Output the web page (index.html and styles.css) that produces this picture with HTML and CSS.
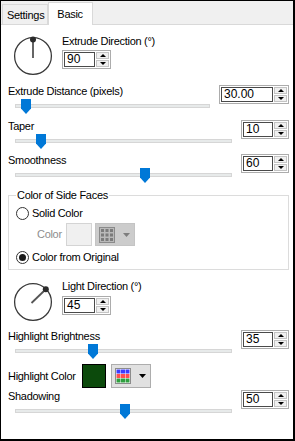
FILE: index.html
```html
<!DOCTYPE html>
<html>
<head>
  <title>Extrude</title>
  <link rel="stylesheet" href="styles.css">
</head>
<body>
  <div class="frame">
    <div class="tabs">
      <div class="tab">Settings</div>
      <div class="tab active">Basic</div>
    </div>

    <div class="panel">
      <div class="dial-row">
        <svg class="dial" width="40" height="40" viewBox="0 0 40 40">
          <circle cx="20" cy="20" r="18.4" fill="none" stroke="#3a3a3a" stroke-width="1.3"/>
          <line x1="20" y1="22" x2="20" y2="4" stroke="#555" stroke-width="1.8"/>
          <circle cx="20" cy="3.5" r="3" fill="#2b2b2b"/>
        </svg>
        <div class="dial-ctl">
          <div class="lbl">Extrude Direction (°)</div>
          <div class="spin"><div class="spin-val w31">90</div><div class="spin-btns"><span class="up"></span><span class="dn"></span></div></div>
        </div>
      </div>

      <div class="slider-row first">
        <div class="lbl">Extrude Distance (pixels)</div>
        <div class="spin"><div class="spin-val w52">30.00</div><div class="spin-btns"><span class="up"></span><span class="dn"></span></div></div>
        <div class="track"><div class="thumb" style="left:5px"></div></div>
      </div>

      <div class="slider-row">
        <div class="lbl">Taper</div>
        <div class="spin"><div class="spin-val w30">10</div><div class="spin-btns"><span class="up"></span><span class="dn"></span></div></div>
        <div class="track"><div class="thumb" style="left:20px"></div></div>
      </div>

      <div class="slider-row">
        <div class="lbl">Smoothness</div>
        <div class="spin"><div class="spin-val w30">60</div><div class="spin-btns"><span class="up"></span><span class="dn"></span></div></div>
        <div class="track"><div class="thumb" style="left:124px"></div></div>
      </div>

      <fieldset class="group">
        <legend>Color of Side Faces</legend>
        <div class="radio-row"><span class="radio"></span>Solid Color</div>
        <div class="color-row">
          <span class="color-lbl">Color</span>
          <span class="swatch off"></span>
          <span class="palette off">
            <svg width="16" height="16" viewBox="0 0 16 16">
              <rect x="0.5" y="0.5" width="15" height="15" fill="#b9b9b9" stroke="#8a8a8a"/>
              <rect x="2" y="2" width="3" height="3" fill="#7b7b7b"/><rect x="6.5" y="2" width="3" height="3" fill="#7b7b7b"/><rect x="11" y="2" width="3" height="3" fill="#7b7b7b"/>
              <rect x="2" y="6.5" width="3" height="3" fill="#7b7b7b"/><rect x="6.5" y="6.5" width="3" height="3" fill="#7b7b7b"/><rect x="11" y="6.5" width="3" height="3" fill="#7b7b7b"/>
              <rect x="2" y="11" width="3" height="3" fill="#7b7b7b"/><rect x="6.5" y="11" width="3" height="3" fill="#7b7b7b"/><rect x="11" y="11" width="3" height="3" fill="#7b7b7b"/>
            </svg>
            <svg class="caret" width="7" height="4" viewBox="0 0 7 4"><polygon points="0,0 7,0 3.5,4" fill="#7d7d7d"/></svg>
          </span>
        </div>
        <div class="radio-row second"><span class="radio checked"></span>Color from Original</div>
      </fieldset>

      <div class="dial-row second">
        <svg class="dial" width="40" height="40" viewBox="0 0 40 40">
          <circle cx="20" cy="20" r="18.4" fill="none" stroke="#3a3a3a" stroke-width="1.3"/>
          <line x1="18.5" y1="21" x2="32" y2="8" stroke="#555" stroke-width="1.8"/>
          <circle cx="32.8" cy="7.2" r="3" fill="#2b2b2b"/>
        </svg>
        <div class="dial-ctl">
          <div class="lbl">Light Direction (°)</div>
          <div class="spin"><div class="spin-val w31">45</div><div class="spin-btns"><span class="up"></span><span class="dn"></span></div></div>
        </div>
      </div>

      <div class="slider-row after-dial">
        <div class="lbl">Highlight Brightness</div>
        <div class="spin"><div class="spin-val w30">35</div><div class="spin-btns"><span class="up"></span><span class="dn"></span></div></div>
        <div class="track"><div class="thumb" style="left:72px"></div></div>
      </div>

      <div class="hl-row">
        <span class="hl-lbl">Highlight Color</span>
        <span class="swatch on"></span>
        <span class="palette on">
          <svg width="16" height="16" viewBox="0 0 16 16">
            <rect x="0.5" y="0.5" width="15" height="15" fill="#fff" stroke="#8c8c8c"/>
            <rect x="1.5" y="1.5" width="4" height="4" fill="#3b3bff"/><rect x="6" y="1.5" width="4" height="4" fill="#3b3bff"/><rect x="10.5" y="1.5" width="4" height="4" fill="#3b3bff"/>
            <rect x="1.5" y="6" width="4" height="4" fill="#ff4f4f"/><rect x="6" y="6" width="4" height="4" fill="#ff4f4f"/><rect x="10.5" y="6" width="4" height="4" fill="#ff4f4f"/>
            <rect x="1.5" y="10.5" width="4" height="4" fill="#2f9f3f"/><rect x="6" y="10.5" width="4" height="4" fill="#2f9f3f"/><rect x="10.5" y="10.5" width="4" height="4" fill="#2f9f3f"/>
          </svg>
          <svg class="caret" width="7" height="4" viewBox="0 0 7 4"><polygon points="0,0 7,0 3.5,4" fill="#000"/></svg>
        </span>
      </div>

      <div class="slider-row shadow">
        <div class="lbl">Shadowing</div>
        <div class="spin"><div class="spin-val w30">50</div><div class="spin-btns"><span class="up"></span><span class="dn"></span></div></div>
        <div class="track"><div class="thumb" style="left:104px"></div></div>
      </div>
    </div>
  </div>
</body>
</html>
```

FILE: styles.css
```css
body {
  margin: 0;
  background: #fff;
  color: #000;
  font-family: "Liberation Sans", Arial, sans-serif;
  font-size: 11px;
  line-height: 13px;
  letter-spacing: -0.3px;
}

.frame {
  box-sizing: border-box;
  width: 295px;
  height: 441px;
  border-left: 1px solid #000;
  border-top: 1px solid #000;
  border-right: 2px solid #000;
  border-bottom: 2px solid #000;
  background: #fff;
}

/* tab strip */
.tabs {
  display: flex;
  align-items: flex-end;
  height: 23px;
  padding-left: 1px;
  background: #f0f0f0;
  border-bottom: 1px solid #d9d9d9;
}

.tab {
  box-sizing: border-box;
  height: 20px;
  padding: 4px 3px 0 4px;
  border: 1px solid #d9d9d9;
  border-bottom: none;
  background: #f0f0f0;
}

.tab.active {
  height: 23px;
  margin-bottom: -1px;
  padding: 5px 9px 0 8px;
  background: #fff;
}

.panel {
  padding: 10px 4px 0 7px;
}

.lbl {
  white-space: nowrap;
}

/* dial + spin */
.dial-row {
  display: flex;
  align-items: flex-start;
}

.dial-row.second {
  margin-top: 10px;
}

.dial {
  display: block;
  margin: 1px 0 0 5px;
}

.dial-row.second .dial {
  margin-top: 2px;
}

.dial-ctl {
  margin-left: 9px;
}

.dial-ctl .spin {
  margin-top: 2px;
}

.dial-row.second .dial-ctl .spin {
  margin-top: 3px;
}

/* numeric up-down */
.spin {
  display: flex;
  gap: 1px;
  padding: 1px;
  border: 1px solid #acacac;
  background: #fff;
  width: max-content;
}

.spin-val {
  box-sizing: border-box;
  height: 15px;
  padding: 0 2px;
  border: 1px solid #4a4a4a;
  font-size: 12px;
  line-height: 13px;
  letter-spacing: 0;
}

.w30 { width: 30px; }
.w31 { width: 31px; }
.w52 { width: 52px; }

.spin-btns {
  display: flex;
  flex-direction: column;
  gap: 1px;
}

.spin-btns span {
  box-sizing: border-box;
  display: flex;
  align-items: center;
  justify-content: center;
  width: 13px;
  height: 7px;
  border: 1px solid #c4c4c4;
  background: #f0f0f0;
}

.spin-btns .up::after,
.spin-btns .dn::after {
  content: "";
  border-left: 3px solid transparent;
  border-right: 3px solid transparent;
}

.spin-btns .up::after {
  border-bottom: 3px solid #000;
}

.spin-btns .dn::after {
  border-top: 3px solid #000;
}

/* slider rows */
.slider-row {
  display: grid;
  grid-template-columns: 1fr auto;
  grid-template-rows: 14px 20px;
}

.slider-row.first {
  margin-top: 9px;
  grid-template-rows: 14px 21px;
}

.slider-row.after-dial {
  margin-top: 8px;
}

.slider-row.shadow {
  margin-top: 2px;
}

.slider-row .spin {
  grid-column: 2;
  grid-row: 1 / span 2;
  align-self: start;
}

.track {
  grid-column: 1;
  grid-row: 2;
  position: relative;
  height: 2px;
  margin: 5px 9px 0 7px;
  background: #e7eaea;
  border: 1px solid #d6d6d6;
}

.thumb {
  position: absolute;
  top: -6px;
  width: 10px;
  height: 15px;
  background: #0078d7;
  clip-path: polygon(0 0, 100% 0, 100% 64%, 50% 100%, 0 64%);
}

/* group box */
.group {
  margin: 1px 0 0;
  padding: 4px 6px 4px 7px;
  border: 1px solid #dcdcdc;
  min-width: 0;
}

.group legend {
  padding: 0 1px;
}

.radio-row {
  display: flex;
  align-items: center;
  height: 15px;
}

.radio-row.second {
  margin-top: 4px;
}

.radio {
  box-sizing: border-box;
  display: flex;
  align-items: center;
  justify-content: center;
  width: 13px;
  height: 13px;
  margin-right: 3px;
  border: 1px solid #333;
  border-radius: 50%;
  background: #fff;
}

.radio.checked::after {
  content: "";
  width: 7px;
  height: 7px;
  border-radius: 50%;
  background: #1a1a1a;
}

.color-row {
  display: flex;
  align-items: center;
  margin-top: 2px;
  height: 23px;
}

.color-lbl {
  margin-left: 21px;
  width: 29px;
  color: #8d8d8d;
}

.swatch {
  box-sizing: border-box;
  display: block;
}

.swatch.off {
  width: 26px;
  height: 23px;
  border: 1px solid #d4d4d4;
  background: #f0f0f0;
}

.palette {
  box-sizing: border-box;
  display: flex;
  align-items: center;
  width: 40px;
  padding-left: 3px;
}

.palette .caret {
  margin-left: 8px;
}

.palette.off {
  height: 23px;
  margin-left: 3px;
  background: #cccccc;
  border: 1px solid #c4c4c4;
}

/* highlight colour */
.hl-row {
  display: flex;
  align-items: center;
  height: 24px;
}

.hl-lbl {
  width: 74px;
}

.swatch.on {
  width: 24px;
  height: 24px;
  border: 1px solid #000;
  background: #0c4a0c;
}

.palette.on {
  height: 24px;
  margin-left: 5px;
  background: #e1e1e1;
  border: 1px solid #adadad;
}
```
